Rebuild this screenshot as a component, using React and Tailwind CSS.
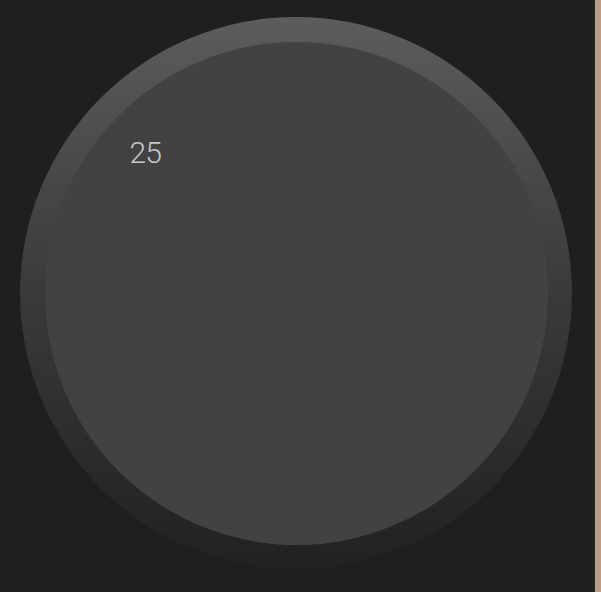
export default function App() {
  return (
    <div className="flex h-[592px] w-[601px] overflow-hidden bg-[#1f1f1f]">
      <main className="flex-1 pl-[20px] pt-[17px]">
        <div className="flex h-[552px] w-[552px] items-center justify-center rounded-full bg-gradient-to-b from-[#5b5c5d] via-[#3a3a3a] to-[#212121]">
          <div className="relative h-[503px] w-[503px] rounded-full bg-[#424242]">
            <span
              className="absolute left-[85px] top-[96px] text-[30px] font-light leading-none tracking-[-1px] text-[#c8c8c8]"
              style={{ fontFamily: 'Roboto, "Liberation Sans", sans-serif' }}
            >
              25
            </span>
          </div>
        </div>
      </main>
      <div className="w-px bg-[#2a2a2a]" />
      <div className="w-[6px] bg-[#c09c82]" />
    </div>
  );
}
